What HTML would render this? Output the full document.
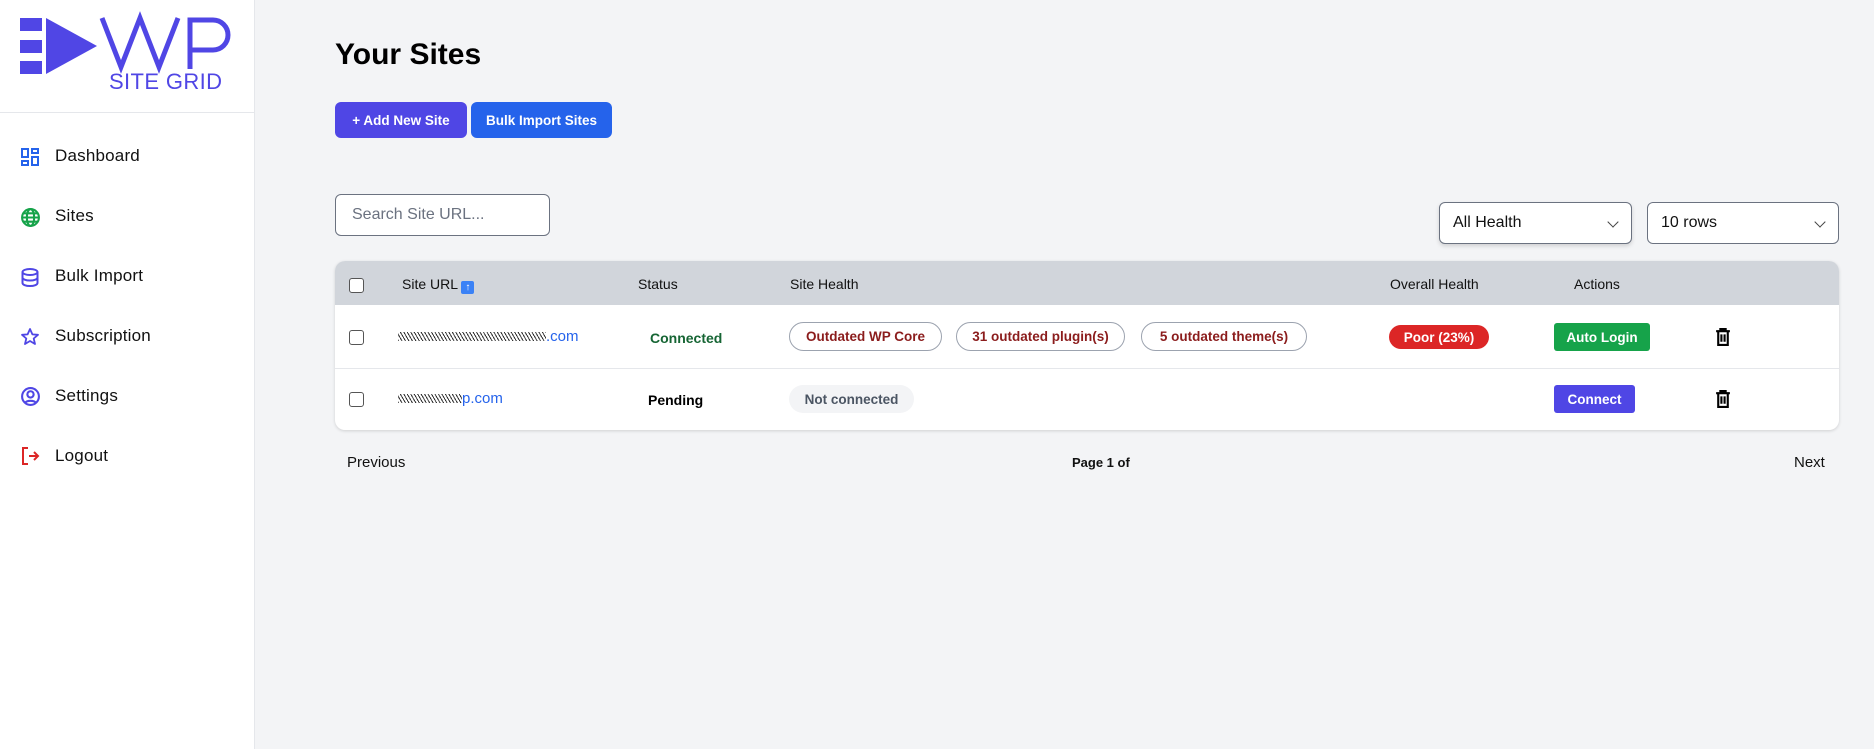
<!DOCTYPE html>
<html><head><meta charset="utf-8"><style>
*{box-sizing:border-box;margin:0;padding:0}
body{width:1874px;height:749px;background:#f3f4f6;font-family:"Liberation Sans",sans-serif;position:relative;overflow:hidden;color:#111}
.abs{position:absolute;white-space:nowrap}
.side{left:0;top:0;width:255px;height:749px;background:#fff;border-right:1px solid #e5e7eb}
.nav{position:absolute;left:55px;font-size:17px;color:#111;letter-spacing:0.2px}
.ic{position:absolute;left:20px}
.btn{position:absolute;color:#fff;font-weight:bold;font-size:13.5px;border-radius:6px;display:flex;align-items:center;justify-content:center;white-space:nowrap}
.box{position:absolute;background:#fff;border:1px solid #6b7280;border-radius:6px;font-size:16px;display:flex;align-items:center;padding-left:13px}
.th{position:absolute;font-size:14px;top:276px;color:#111;white-space:nowrap}
.pill{position:absolute;height:29px;border:1px solid #9ca3af;border-radius:15px;color:#8b1c1c;font-weight:bold;font-size:13.5px;display:flex;align-items:center;justify-content:center;white-space:nowrap}
.cb{position:absolute;left:349px;width:15px;height:15px;border:1.5px solid #555;border-radius:3px;background:#fff}
.chev{position:absolute;right:14px;top:15px;width:8px;height:8px;border-right:1.5px solid #444;border-bottom:1.5px solid #444;transform:rotate(45deg)}
</style></head><body>
<div class="abs side">
<svg class="abs" style="left:0;top:0" width="255" height="100" viewBox="0 0 255 100">
<rect x="20" y="18" width="22" height="13" fill="#5046e5"/>
<rect x="20" y="40" width="22" height="13" fill="#5046e5"/>
<rect x="20" y="61" width="22" height="13" fill="#5046e5"/>
<polygon points="46,18 97,46 46,74" fill="#5046e5"/>
<polyline points="102,18 121,67 140,18 159,67 178,18" fill="none" stroke="#5046e5" stroke-width="5" stroke-linejoin="miter"/>
<path d="M190 69 V20 H213 a15 15 0 0 1 0 30 H190" fill="none" stroke="#5046e5" stroke-width="5"/>
<text x="109" y="89" font-family="Liberation Sans,sans-serif" font-size="22" fill="#5046e5" textLength="113">SITE GRID</text>
</svg>
<div class="abs" style="left:0;top:112px;width:255px;height:1px;background:#e5e7eb"></div>
<svg class="ic" style="top:147px" width="20" height="20" viewBox="0 0 20 20" fill="none" stroke="#2563eb" stroke-width="2"><rect x="2" y="2" width="6" height="8"/><rect x="12" y="2" width="6" height="4"/><rect x="2" y="14" width="6" height="4"/><rect x="12" y="10" width="6" height="8"/></svg>
<div class="nav" style="top:146px">Dashboard</div>
<svg class="ic" style="top:207px" width="21" height="21" viewBox="0 0 20 20" fill="none" stroke="#16a34a" stroke-width="2"><circle cx="10" cy="10" r="8"/><ellipse cx="10" cy="10" rx="3.5" ry="8"/><path d="M2 10h16M3 6h14M3 14h14"/></svg>
<div class="nav" style="top:206px">Sites</div>
<svg class="ic" style="top:267px" width="20" height="21" viewBox="0 0 20 20" fill="none" stroke="#4f46e5" stroke-width="2"><ellipse cx="10" cy="4.5" rx="7.5" ry="3"/><path d="M2.5 4.5v11c0 1.7 3.4 3 7.5 3s7.5-1.3 7.5-3v-11M2.5 10c0 1.7 3.4 3 7.5 3s7.5-1.3 7.5-3"/></svg>
<div class="nav" style="top:266px">Bulk Import</div>
<svg class="ic" style="top:327px" width="20" height="20" viewBox="0 0 20 20" fill="none" stroke="#4f46e5" stroke-width="1.8" stroke-linejoin="round"><polygon points="10,2 12.4,7.4 18,7.8 13.7,11.5 15,17 10,14 5,17 6.3,11.5 2,7.8 7.6,7.4"/></svg>
<div class="nav" style="top:326px">Subscription</div>
<svg class="ic" style="top:386px" width="21" height="21" viewBox="0 0 20 20" fill="none" stroke="#4f46e5" stroke-width="2"><circle cx="10" cy="10" r="8"/><circle cx="10" cy="8" r="3"/><path d="M5 16c1.5-2.5 8.5-2.5 10 0"/></svg>
<div class="nav" style="top:386px">Settings</div>
<svg class="ic" style="top:446px" width="20" height="20" viewBox="0 0 20 20" fill="none" stroke="#dc2626" stroke-width="2"><path d="M8 2H3v16h5M9 10h9M14 6l4 4-4 4"/></svg>
<div class="nav" style="top:446px">Logout</div>
</div>

<div class="abs" style="left:335px;top:38px;font-size:30px;font-weight:bold;color:#000">Your Sites</div>
<div class="btn" style="left:335px;top:102px;width:132px;height:36px;background:#4f46e5">+ Add New Site</div>
<div class="btn" style="left:471px;top:102px;width:141px;height:36px;background:#2563eb">Bulk Import Sites</div>
<div class="box" style="left:335px;top:194px;width:215px;height:42px;color:#6b7280;padding-left:16px">Search Site URL...</div>
<div class="box" style="left:1439px;top:202px;width:193px;height:42px;box-shadow:0 2px 4px rgba(0,0,0,.15)">All Health<div class="chev"></div></div>
<div class="box" style="left:1647px;top:202px;width:192px;height:42px">10 rows<div class="chev"></div></div>

<div class="abs" style="left:335px;top:261px;width:1504px;height:169px;background:#fff;border-radius:10px;box-shadow:0 1px 3px rgba(0,0,0,.15);overflow:hidden">
<div class="abs" style="left:0;top:0;width:1504px;height:44px;background:#d1d5db"></div>
<div class="abs" style="left:0;top:107px;width:1504px;height:1px;background:#e5e7eb"></div>
</div>
<div class="cb" style="top:278px"></div>
<div class="th" style="left:402px">Site URL <span style="display:inline-block;width:13px;height:13px;background:#3b82f6;color:#fff;font-size:10px;text-align:center;line-height:13px;border-radius:2px;vertical-align:-1px">↑</span></div>
<div class="th" style="left:638px">Status</div>
<div class="th" style="left:790px">Site Health</div>
<div class="th" style="left:1390px">Overall Health</div>
<div class="th" style="left:1574px">Actions</div>

<div class="cb" style="top:330px"></div>
<div class="abs" style="left:398px;top:328px;font-size:15px;color:#2563eb"><span style="display:inline-block;width:148px;height:9px;background:repeating-linear-gradient(60deg,#333 0 1px,#fff 1px 3px)"></span>.com</div>
<div class="abs" style="left:650px;top:330px;font-size:14px;font-weight:bold;color:#166534">Connected</div>
<div class="pill" style="left:789px;top:322px;width:153px">Outdated WP Core</div>
<div class="pill" style="left:956px;top:322px;width:169px">31 outdated plugin(s)</div>
<div class="pill" style="left:1141px;top:322px;width:166px">5 outdated theme(s)</div>
<div class="abs" style="left:1389px;top:325px;width:100px;height:24px;background:#dc2626;color:#fff;border-radius:12px;font-weight:bold;font-size:13.5px;display:flex;align-items:center;justify-content:center">Poor (23%)</div>
<div class="btn" style="left:1554px;top:323px;width:96px;height:28px;background:#16a34a;border-radius:3px">Auto Login</div>
<svg class="abs" style="left:1716px;top:328px" width="14" height="18" viewBox="0 0 13 17" fill="none" stroke="#000" stroke-width="2"><path d="M0 3h13M4 3V1h5v2M2 3v13h9V3M5 6v7M8 6v7"/></svg>

<div class="cb" style="top:392px"></div>
<div class="abs" style="left:398px;top:390px;font-size:15px;color:#2563eb"><span style="display:inline-block;width:64px;height:9px;background:repeating-linear-gradient(60deg,#333 0 1px,#fff 1px 3px)"></span>p.com</div>
<div class="abs" style="left:648px;top:392px;font-size:14px;font-weight:bold;color:#000">Pending</div>
<div class="abs" style="left:789px;top:385px;width:125px;height:28px;background:#f3f4f6;border-radius:14px;color:#4b5563;font-weight:bold;font-size:13.5px;display:flex;align-items:center;justify-content:center">Not connected</div>
<div class="btn" style="left:1554px;top:385px;width:81px;height:28px;background:#4f46e5;border-radius:3px">Connect</div>
<svg class="abs" style="left:1716px;top:390px" width="14" height="18" viewBox="0 0 13 17" fill="none" stroke="#000" stroke-width="2"><path d="M0 3h13M4 3V1h5v2M2 3v13h9V3M5 6v7M8 6v7"/></svg>

<div class="abs" style="left:347px;top:454px;font-size:15px">Previous</div>
<div class="abs" style="left:1072px;top:455px;font-size:13px;font-weight:bold">Page 1 of</div>
<div class="abs" style="left:1794px;top:454px;font-size:15px">Next</div>
</body></html>
